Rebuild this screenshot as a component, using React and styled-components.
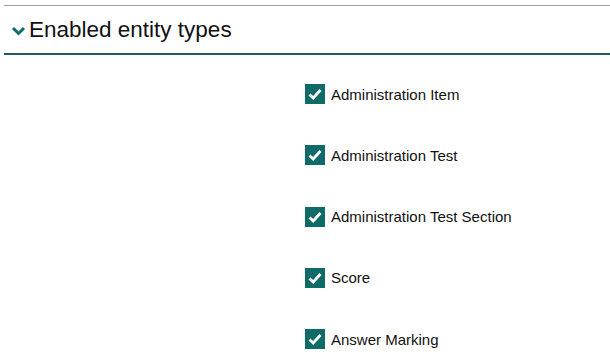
import React from 'react';
import styled, { createGlobalStyle } from 'styled-components';

const GlobalStyle = createGlobalStyle`
  body {
    margin: 0;
    background: #ffffff;
    font-family: "Liberation Sans", Arial, sans-serif;
  }
`;

const types = [
  'Administration Item',
  'Administration Test',
  'Administration Test Section',
  'Score',
  'Answer Marking',
];

const App = () => {
  return (
    <Page>
      <GlobalStyle />
      <Section>
        <Header>
          <Chevron viewBox="0 0 14 10">
            <path d="M1.5 2 L7 7.5 L12.5 2" fill="none" stroke="#0f6b68" strokeWidth="3" />
          </Chevron>
          <Title>Enabled entity types</Title>
        </Header>
        <List>
          {types.map((t) => (
            <Row key={t}>
              <Box>
                <svg width="14" height="12" viewBox="0 0 14 12">
                  <path d="M1.5 6.5 L5.2 10 L12.5 2" fill="none" stroke="#fff" strokeWidth="2.8" />
                </svg>
              </Box>
              <Label>{t}</Label>
            </Row>
          ))}
        </List>
      </Section>
    </Page>
  );
};

const Page = styled.div`
  width: 610px;
  height: 360px;
  overflow: hidden;
  padding: 5px 0 0 4px;
  box-sizing: border-box;
`;

const Section = styled.div`
  border-top: 1px solid #a0a0a0;
`;

const Header = styled.div`
  height: 49px;
  display: flex;
  align-items: center;
  gap: 3px;
  padding: 2px 0 2px 7px;
  border-bottom: 2px solid #1d5c5a;
  box-sizing: border-box;
`;

const Chevron = styled.svg`
  width: 15px;
  height: 10px;
  margin-top: 3px;
`;

const Title = styled.h2`
  margin: 0;
  font-weight: normal;
  font-size: 22.5px;
  color: #111;
`;

const List = styled.div`
  display: flex;
  flex-direction: column;
  gap: 41.25px;
  padding: 29px 0 0 301px;
`;

const Row = styled.div`
  display: flex;
  align-items: center;
  gap: 6px;
  height: 20px;
`;

const Box = styled.div`
  width: 20px;
  height: 20px;
  background: #0f6b68;
  display: flex;
  align-items: center;
  justify-content: center;
`;

const Label = styled.span`
  font-size: 15px;
  color: #111;
`;

export default App;
